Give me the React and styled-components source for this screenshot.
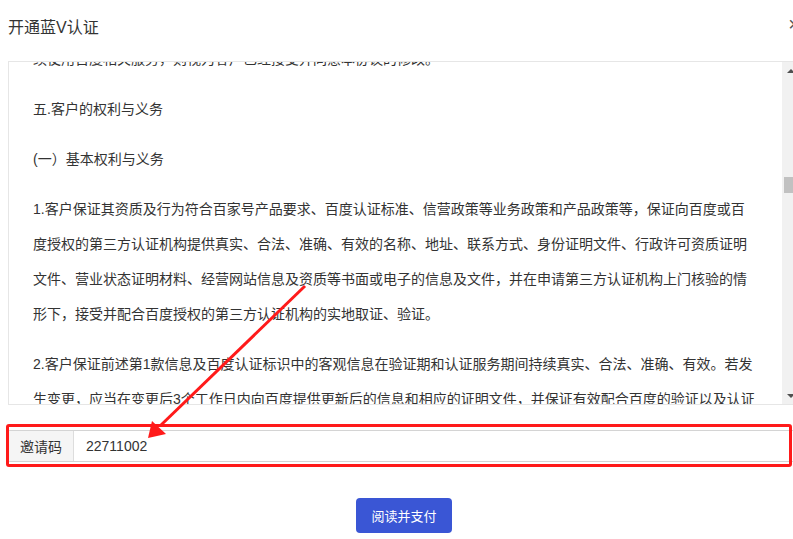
import React, { useLayoutEffect, useRef } from "react";
import styled, { createGlobalStyle } from "styled-components";

const GlobalStyle = createGlobalStyle`
  html, body {
    margin: 0;
    padding: 0;
    background: #fff;
    overflow: hidden;
  }
  body {
    font-family: "Liberation Sans", "Noto Sans CJK SC", sans-serif;
    color: #333;
  }
`;

const Page = styled.div`
  position: relative;
  width: 793px;
  height: 539px;
  overflow: hidden;
`;

const Modal = styled.div`
  width: 792px;
  margin-left: 8px;
  display: flex;
  flex-direction: column;
`;

const Header = styled.div`
  height: 52px;
  display: flex;
  align-items: center;
  justify-content: space-between;
`;

const Title = styled.h3`
  margin: 0;
  font-size: 16px;
  font-weight: normal;
  color: #333;
`;

const Close = styled.span`
  font-size: 20px;
  line-height: 1;
  color: #555;
  margin-top: -4px;
`;

const Agreement = styled.div`
  margin-top: 9px;
  height: 344px;
  box-sizing: border-box;
  border: 1px solid #e6e6e6;
  display: flex;
`;

const ScrollArea = styled.div`
  position: relative;
  flex: 1;
  overflow-y: scroll;
  scrollbar-width: none;
  padding: 0 26px 0 24px;
  &::-webkit-scrollbar {
    display: none;
  }
`;

const Para = styled.p`
  margin: 0 0 15px;
  font-size: 14px;
  line-height: 35px;
  color: #333;
`;

const ScrollBar = styled.div`
  width: 17px;
  flex: none;
  background: #f1f1f1;
  display: flex;
  flex-direction: column;
  align-items: center;
`;

const ArrowButton = styled.div`
  width: 17px;
  height: 17px;
  display: flex;
  align-items: center;
  justify-content: center;
  &::before {
    content: "";
    width: 0;
    height: 0;
    border-left: 4px solid transparent;
    border-right: 4px solid transparent;
    ${(p) =>
      p.$dir === "up"
        ? "border-bottom: 4px solid #505050;"
        : "border-top: 4px solid #505050;"}
  }
`;

const Track = styled.div`
  flex: 1;
  width: 100%;
  display: flex;
  flex-direction: column;
  align-items: center;
`;

const Thumb = styled.div`
  width: 13px;
  height: 16px;
  margin-top: 98px;
  background: #c1c1c1;
`;

const InviteWrap = styled.div`
  position: relative;
  margin-top: 25px;
`;

const InputGroup = styled.div`
  display: flex;
  height: 32px;
  box-sizing: border-box;
  border: 1px solid #d4d4d4;
  border-radius: 2px;
  background: #fff;
`;

const Addon = styled.span`
  width: 64px;
  flex: none;
  display: flex;
  align-items: center;
  justify-content: center;
  background: #f5f5f5;
  border-right: 1px solid #ddd;
  font-size: 14px;
  color: #333;
`;

const CodeInput = styled.input`
  flex: 1;
  border: none;
  outline: none;
  padding: 0 12px;
  font-family: "Liberation Sans", "Noto Sans CJK SC", sans-serif;
  font-size: 14px;
  color: #333;
  background: transparent;
`;

const Highlight = styled.div`
  position: absolute;
  top: -6px;
  bottom: -5px;
  left: -2px;
  right: 8px;
  border: 3px solid #ff1a1a;
  border-radius: 3px;
  pointer-events: none;
`;

const Footer = styled.div`
  display: flex;
  justify-content: center;
  margin-top: 36px;
`;

const PayButton = styled.button`
  height: 35px;
  padding: 0 15px;
  border: none;
  border-radius: 4px;
  background: #3a56d5;
  color: #fff;
  font-family: "Liberation Sans", "Noto Sans CJK SC", sans-serif;
  font-size: 13px;
  cursor: pointer;
`;

const ArrowOverlay = styled.svg`
  position: absolute;
  left: 0;
  top: 0;
  pointer-events: none;
`;

const paragraphs = [
  "百度有权根据业务发展需要对本协议进行修改，修改后的协议一经公布即有效代替原协议。客户在协议修改后，如继续使用百度相关服务，则视为客户已经接受并同意本协议的修改。",
  "五.客户的权利与义务",
  "(一）基本权利与义务",
  "1.客户保证其资质及行为符合百家号产品要求、百度认证标准、信营政策等业务政策和产品政策等，保证向百度或百度授权的第三方认证机构提供真实、合法、准确、有效的名称、地址、联系方式、身份证明文件、行政许可资质证明文件、营业状态证明材料、经营网站信息及资质等书面或电子的信息及文件，并在申请第三方认证机构上门核验的情形下，接受并配合百度授权的第三方认证机构的实地取证、验证。",
  "2.客户保证前述第1款信息及百度认证标识中的客观信息在验证期和认证服务期间持续真实、合法、准确、有效。若发生变更，应当在变更后3个工作日内向百度提供更新后的信息和相应的证明文件，并保证有效配合百度的验证以及认证服务的开展，如因客户未及时更新信息导致的任何后果由客户自行承担。",
  "3.客户应妥善保管账号及密码，因客户原因导致账号被盗用或密码泄露的，由客户自行承担相应责任。",
];

export default function App() {
  const scrollRef = useRef(null);
  const anchorRef = useRef(null);

  useLayoutEffect(() => {
    if (scrollRef.current && anchorRef.current) {
      scrollRef.current.scrollTop = anchorRef.current.offsetTop - 30;
    }
  }, []);

  return (
    <Page>
      <GlobalStyle />
      <Modal>
        <Header>
          <Title>开通蓝V认证</Title>
          <Close>×</Close>
        </Header>
        <Agreement>
          <ScrollArea ref={scrollRef}>
            {paragraphs.map((t, i) => (
              <Para key={i} ref={i === 1 ? anchorRef : undefined}>
                {t}
              </Para>
            ))}
          </ScrollArea>
          <ScrollBar>
            <ArrowButton $dir="up" />
            <Track>
              <Thumb />
            </Track>
            <ArrowButton $dir="down" />
          </ScrollBar>
        </Agreement>
        <InviteWrap>
          <InputGroup>
            <Addon>邀请码</Addon>
            <CodeInput defaultValue="22711002" />
          </InputGroup>
          <Highlight />
        </InviteWrap>
        <Footer>
          <PayButton>阅读并支付</PayButton>
        </Footer>
      </Modal>
      <ArrowOverlay width="793" height="539" viewBox="0 0 793 539">
        <line x1="305" y1="286" x2="160" y2="426" stroke="#ff1a1a" strokeWidth="3" />
        <polygon points="148,438 152,421 166,434" fill="#ff1a1a" />
      </ArrowOverlay>
    </Page>
  );
}
